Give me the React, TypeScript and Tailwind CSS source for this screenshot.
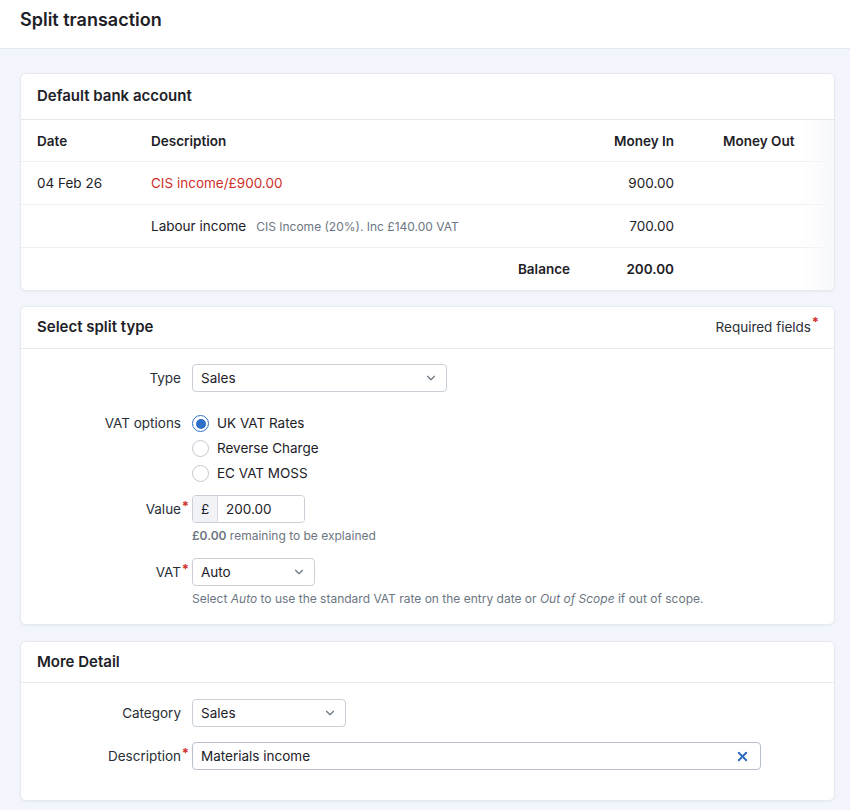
import React, { useState } from 'react';
import { ChevronDown, X } from 'lucide-react';

const font = { fontFamily: 'Inter, "Noto Sans", Arial, sans-serif' };

function Card({ title, right, headerHeight, className = '', children }: { title: string; right?: React.ReactNode; headerHeight: string; className?: string; children: React.ReactNode }) {
  return (
    <section className={`bg-white rounded-md border border-[#e6eaf0] shadow-[0_1px_2px_rgba(20,40,80,0.05)] ${className}`}>
      <header className={`flex items-center justify-between ${headerHeight} px-4 border-b border-[#e8ebf0]`}>
        <h2 className="text-[15px] font-semibold text-[#1d2127]">{title}</h2>
        {right}
      </header>
      {children}
    </section>
  );
}

function Required() {
  return <span className="absolute -right-[8px] -top-[5px] text-[13px] leading-5 font-bold text-[#d0312d]">*</span>;
}

function Field({ label, required, children, align = 'items-center' }: { label: string; required?: boolean; children: React.ReactNode; align?: string }) {
  return (
    <div className={`flex ${align} gap-[11px]`}>
      <div className="w-[160px] shrink-0 text-right text-[13.5px] leading-[25px] text-[#2a2f36]">
        <span className="relative">
          {label}
          {required && <Required />}
        </span>
      </div>
      <div className="min-w-0">{children}</div>
    </div>
  );
}

function Select({ value, width }: { value: string; width: string }) {
  return (
    <div className={`${width} h-[28px] flex items-center justify-between pl-2 pr-2 rounded border border-[#c9cfd6] bg-white text-[13.5px] text-[#1d2127]`}>
      <span>{value}</span>
      <ChevronDown className="w-[14px] h-[14px] text-[#6b7581]" strokeWidth={2} />
    </div>
  );
}

function Radio({ label, checked }: { label: string; checked?: boolean }) {
  return (
    <label className="flex items-center gap-2 h-[25px] text-[13.5px] text-[#1d2127]">
      <span
        className={
          checked
            ? 'w-[17px] h-[17px] rounded-full border border-[#2f6fc7] flex items-center justify-center bg-white'
            : 'w-[17px] h-[17px] rounded-full border border-[#c3c9d0] bg-white'
        }
      >
        {checked && <span className="w-[10px] h-[10px] rounded-full bg-[#2f6fc7]" />}
      </span>
      {label}
    </label>
  );
}

export default function App() {
  const [description] = useState('Materials income');

  return (
    <div className="min-h-screen bg-[#f2f5fb] text-[#1d2127]" style={font}>
      <div className="h-[49px] bg-white border-b border-[#e3e7ee] px-5 pt-[7px]">
        <h1 className="text-[18px] leading-[26px] font-semibold">Split transaction</h1>
      </div>

      <div className="pl-5 pr-[15px] pt-6 pb-3 flex flex-col gap-[15px]">
        {/* bank account statement */}
        <section className="bg-white rounded-md border border-[#e6eaf0] shadow-[0_1px_2px_rgba(20,40,80,0.05)] overflow-hidden">
          <header className="flex items-center h-[46px] px-4 border-b border-[#e3e7ee]">
            <h2 className="text-[15px] font-semibold">Default bank account</h2>
          </header>
          <div className="relative text-[13.5px]">
            <div className="flex items-center h-[42px] pt-px px-4 border-b border-[#eceff3] font-semibold">
              <div className="w-[114px]">Date</div>
              <div className="flex-1">Description</div>
              <div className="w-[104px] text-right">Money In</div>
              <div className="w-[144px] pl-[49px]">Money Out</div>
            </div>
            <div className="flex items-center h-[43px] px-4 border-b border-[#eceff3]">
              <div className="w-[114px]">04 Feb 26</div>
              <div className="flex-1 text-[#cc2f2a]">CIS income/£900.00</div>
              <div className="w-[104px] text-right">900.00</div>
              <div className="w-[144px]" />
            </div>
            <div className="flex items-center h-[43px] px-4 border-b border-[#eceff3]">
              <div className="w-[114px]" />
              <div className="flex-1 flex items-baseline gap-[10px]">
                <span>Labour income</span>
                <span className="text-[12px] text-[#6c7682]">CIS Income (20%). Inc £140.00 VAT</span>
              </div>
              <div className="w-[104px] text-right">700.00</div>
              <div className="w-[144px]" />
            </div>
            <div className="flex items-center h-[42px] px-4 font-semibold">
              <div className="flex-1 text-right">Balance</div>
              <div className="w-[104px] text-right">200.00</div>
              <div className="w-[144px]" />
            </div>
            <div className="pointer-events-none absolute inset-y-0 right-0 w-[36px] bg-gradient-to-r from-transparent to-[#f7f8fa]" />
          </div>
        </section>

        <Card
          title="Select split type"
          headerHeight="h-[42px]"
          right={
            <span className="relative text-[13.5px] text-[#2a2f36] mr-[7px]">
              Required fields
              <Required />
            </span>
          }
        >
          <div className="pt-[15px] pb-[17px] flex flex-col">
            <Field label="Type">
              <Select value="Sales" width="w-[255px]" />
            </Field>

            <div className="mt-[19px]">
              <Field label="VAT options" align="items-start">
                <div className="flex flex-col">
                  <Radio label="UK VAT Rates" checked />
                  <Radio label="Reverse Charge" />
                  <Radio label="EC VAT MOSS" />
                </div>
              </Field>
            </div>

            <div className="mt-[9px]">
              <Field label="Value" required>
                <div className="flex h-[28px] w-[113px] rounded border border-[#c9cfd6] overflow-hidden text-[13.5px]">
                  <span className="w-[25px] flex items-center justify-center bg-[#f1f3f6] border-r border-[#d5dae0]">£</span>
                  <span className="flex-1 flex items-center pl-2 bg-white">200.00</span>
                </div>
              </Field>
            </div>
            <div className="pl-[171px] mt-[5px] text-[12px] leading-4 text-[#6c7682]">
              <span className="font-semibold">£0.00</span> remaining to be explained
            </div>

            <div className="mt-[14px]">
              <Field label="VAT" required>
                <Select value="Auto" width="w-[123px]" />
              </Field>
            </div>
            <div className="pl-[171px] mt-[5px] text-[12px] leading-4 text-[#6c7682]">
              Select <em>Auto</em> to use the standard VAT rate on the entry date or <em>Out of Scope</em> if out of scope.
            </div>
          </div>
        </Card>

        <Card title="More Detail" headerHeight="h-[41px]" className="mt-px">
          <div className="pt-4 pb-[30px] flex flex-col gap-[15px]">
            <Field label="Category">
              <Select value="Sales" width="w-[154px]" />
            </Field>
            <Field label="Description" required>
              <div className="w-[569px] h-[28px] flex items-center justify-between pl-2 pr-[10px] rounded border border-[#b9c1ca] bg-white text-[13.5px]">
                <span>{description}</span>
                <X className="w-[15px] h-[15px] text-[#2d6cc0]" strokeWidth={3} />
              </div>
            </Field>
          </div>
        </Card>
      </div>
    </div>
  );
}
